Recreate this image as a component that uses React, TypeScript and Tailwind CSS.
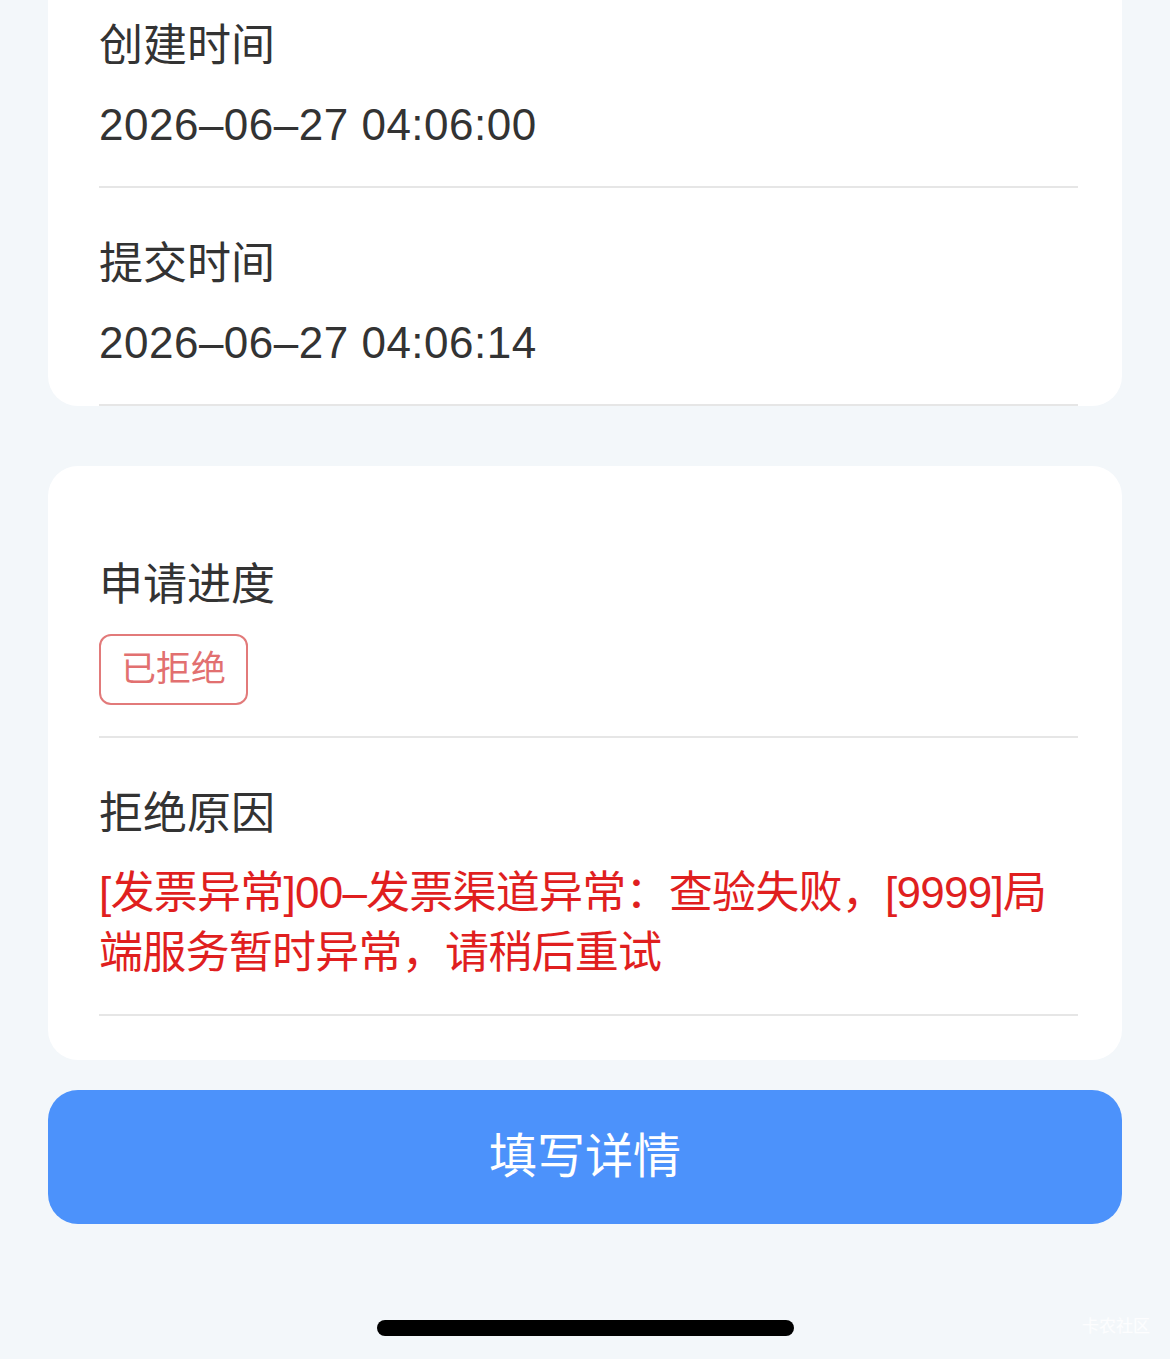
import React from "react";

const font = { fontFamily: '"Liberation Sans", "Noto Sans CJK SC", sans-serif' };

function Item({ label, children }: { label: string; children: React.ReactNode }) {
  return (
    <div className="pt-[43px] pb-[31px] border-b-2 border-[#e6e6e6]">
      <div className="text-[44px] leading-[66px] text-[#333333]">{label}</div>
      <div className="mt-[16px]">{children}</div>
    </div>
  );
}

function Value({ text }: { text: string }) {
  return <div className="text-[44px] leading-[60px] tracking-[0.5px] text-[#333333]">{text}</div>;
}

export default function App() {
  return (
    <div className="relative min-h-[1359px] overflow-hidden bg-[#f3f7fa]" style={font}>
      <div className="px-[48px]">
        {/* Times card, scrolled so its top is out of view */}
        <div className="-mt-[30px] rounded-[30px] bg-white pl-[51px] pr-[44px]">
          <Item label="创建时间">
            <Value text="2026–06–27 04:06:00" />
          </Item>
          <Item label="提交时间">
            <Value text="2026–06–27 04:06:14" />
          </Item>
        </div>

        {/* Progress card */}
        <div className="mt-[60px] rounded-[30px] bg-white pl-[51px] pr-[44px] pt-[43px] pb-[44px]">
          <Item label="申请进度">
            <span className="inline-flex h-[71px] items-center rounded-[12px] border-2 border-[#e27a7a] px-[20px] text-[35px] text-[#e27070]">
              已拒绝
            </span>
          </Item>
          <Item label="拒绝原因">
            <div className="text-[44px] leading-[60px] tracking-[-0.75px] text-[#e01f1f]">
              [发票异常]00–发票渠道异常：查验失败，[9999]局端服务暂时异常，请稍后重试
            </div>
          </Item>
        </div>

        <button className="mt-[30px] flex h-[134px] w-full items-center justify-center rounded-[30px] bg-[#4c92fb] text-[48px] text-white">
          填写详情
        </button>
      </div>

      <div className="mt-[96px] flex justify-center">
        <div className="h-[16px] w-[417px] rounded-full bg-black" />
      </div>

      <div className="absolute bottom-[20px] right-[20px] text-[17px] text-white/80">卡农社区</div>
    </div>
  );
}
